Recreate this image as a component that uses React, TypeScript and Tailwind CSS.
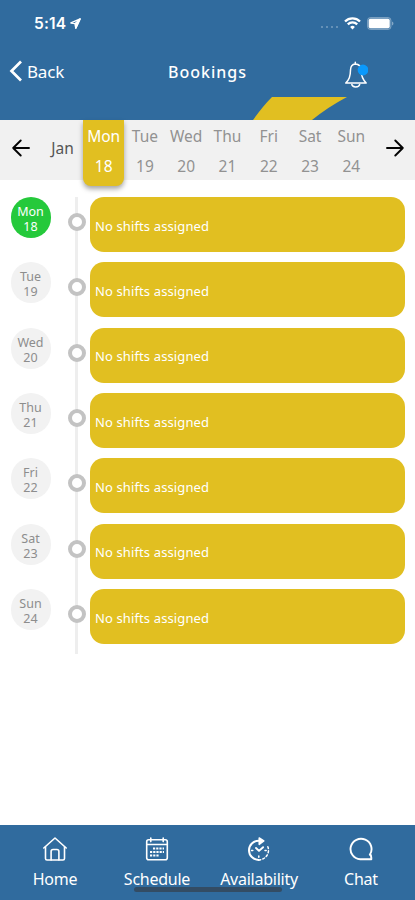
import React from 'react';

interface Day {
  name: string;
  date: number;
}

const DAYS: Day[] = [
  { name: 'Mon', date: 18 },
  { name: 'Tue', date: 19 },
  { name: 'Wed', date: 20 },
  { name: 'Thu', date: 21 },
  { name: 'Fri', date: 22 },
  { name: 'Sat', date: 23 },
  { name: 'Sun', date: 24 }
];

const SELECTED = 18;

const StatusBar: React.FC = () => (
  <div className="flex h-[46px] items-center pl-[34px] pr-[21px] text-white">
    <span className="mt-px font-['Inter','Liberation_Sans',sans-serif] text-[15.5px] font-semibold leading-none tracking-[0.2px]">5:14</span>
    <svg className="ml-1 h-[11px] w-[11px]" viewBox="0 0 12 12" fill="none" stroke="currentColor" strokeWidth="1.5" strokeLinejoin="round">
      <path d="M11 1 1 5.4l4.7.7.6 4.9z" />
      <path d="M11 1 5.7 6.1l.6 4.9z" fill="currentColor" />
    </svg>
    <div className="ml-auto mt-2 flex gap-[2.5px]">
      {[0, 1, 2, 3].map((dot) => (
        <span key={dot} className="h-[2.5px] w-[2.5px] rounded-full bg-white/35" />
      ))}
    </div>
    <svg className="ml-[6px] h-[13px] w-[17px]" viewBox="0 0 17 13" fill="none" stroke="currentColor" strokeWidth="2.3">
      <path d="M1 4.5a10.6 10.6 0 0 1 15 0" />
      <path d="M3.8 7.4a6.7 6.7 0 0 1 9.4 0" />
      <path d="m8.5 12.5-2.4-2.6a3.4 3.4 0 0 1 4.8 0z" fill="currentColor" stroke="none" />
    </svg>
    <svg className="ml-[6px] h-[13px] w-[27px]" viewBox="0 0 27 13">
      <rect x=".5" y=".5" width="23.5" height="12" rx="3" fill="#fff" fillOpacity=".15" stroke="#fff" strokeOpacity=".3" />
      <rect x="1.7" y="1.7" width="21" height="9.6" rx="1.7" fill="#fff" />
      <path d="M25.2 4.5c1.6.5 1.6 3.5 0 4z" fill="#fff" fillOpacity=".5" />
    </svg>
  </div>
);

const BellIcon: React.FC = () => (
  <svg className="h-[30px] w-6" viewBox="0 0 24 30" fill="none" stroke="currentColor" strokeWidth="1.5" strokeLinecap="round" strokeLinejoin="round">
    <path d="M11.3 4V2.2M11.3 4C8 4.3 6.6 6.6 6.500 10c-.1 6.800-1.400 9.300-4.700 13.100h20.400c-3.300-3.400-5-6.300-5.200-13.100-.1-3.400-2.100-5.800-5.700-6Z" />
    <path d="M7.8 24.4c.4 3.3 7.4 3.3 7.9 0" />
    <circle cx="19" cy="10" r="5.4" fill="#0a99fc" stroke="none" />
  </svg>
);

const Header: React.FC = () => (
  <header className="relative h-[120px] shrink-0 bg-[#306b9e]">
    <StatusBar />
    <div className="flex h-[54px] items-center pl-[9px] pr-[47px] text-white">
      <svg className="-mt-1 h-[22px] w-[14px]" viewBox="0 0 14 22" fill="none" stroke="currentColor" strokeWidth="2.7">
        <path d="M12 1.5 2.5 11l9.5 9.5" />
      </svg>
      <span className="-mt-[3px] ml-1 w-[141px] text-[17px] leading-none tracking-[-0.2px]">Back</span>
      <h1 className="-mt-[2px] text-[16px] font-medium leading-none tracking-[1px]">Bookings</h1>
      <button type="button" className="ml-auto mt-1">
        <BellIcon />
      </button>
    </div>
    <svg className="absolute bottom-0 left-[253px] h-[23px] w-[94px]" viewBox="0 0 94 23">
      <path d="M0 23Q10 9 19 0h75Q75 10 59 23Z" fill="#e1bf21" />
    </svg>
  </header>
);

const Arrow: React.FC<{ className?: string }> = ({ className }) => (
  <svg className={className} width="18" height="18" viewBox="0 0 18 18" fill="none" stroke="#050505" strokeWidth="1.9" strokeLinecap="round" strokeLinejoin="round">
    <path d="M17 9H1.2M8.7 1.5 1.2 9l7.5 7.5" />
  </svg>
);

const WeekStrip: React.FC = () => (
  <div className="flex h-[60px] shrink-0 items-center bg-[#f1f1f1] pb-[4px] pl-3">
    <Arrow />
    <span className="ml-[14px] mt-[2px] w-[37px] text-center text-[15.5px] leading-none text-[#555]">Jan</span>
    <div className="-mb-[4px] ml-[2px] flex w-[289px] self-stretch">
      {DAYS.map(({ name, date }) => (
        <div
          key={date}
          className={`flex flex-1 flex-col items-center pt-2 text-[15.5px] leading-[16px] ${
            date === SELECTED
              ? 'z-10 h-[66px] rounded-b-[8px] bg-[#e1bf21] text-white shadow-[0_3px_5px_rgba(0,0,0,0.35)]'
              : 'text-[#929292]'
          }`}
        >
          <span>{name}</span>
          <span className="mt-[14px]">{date}</span>
        </div>
      ))}
    </div>
    <Arrow className="ml-[14px] rotate-180" />
  </div>
);

const ShiftRow: React.FC<Day> = ({ name, date }) => (
  <div className="flex h-[55px] items-start">
    <div
      className={`flex h-[41px] w-10 items-center justify-center rounded-full pt-[3px] text-center text-[12.5px] leading-[15px] ${
        date === SELECTED ? 'bg-[#25c93b] text-white' : 'bg-[#f2f2f2] text-[#8d8d8d]'
      }`}
    >
      <p>
        {name}
        <br />
        {date}
      </p>
    </div>
    <div className="z-10 ml-[17px] mt-[16px] h-[18px] w-[18px] rounded-full border-[4px] border-[#c3c3c3] bg-white" />
    <div className="ml-[4.5px] flex h-full w-[315px] items-center rounded-[14px] bg-[#e1bf21] pl-[5px] pt-[4px] text-[13px] tracking-[0.12px] text-white">
      No shifts assigned
    </div>
  </div>
);

const HomeIcon: React.FC = () => (
  <svg className="h-6 w-[26px]" viewBox="0 0 26 24" fill="none" stroke="currentColor" strokeWidth="1.6" strokeLinecap="round" strokeLinejoin="round">
    <path d="M1.8 11 13 1l11.2 10" />
    <path d="M3.5 10v11.5q0 1.5 1.5 1.5h16q1.5 0 1.5-1.5V10" />
    <path d="M9.1 23v-8.5q0-2 2-2h3.8q2 0 2 2V23" />
  </svg>
);

const ScheduleIcon: React.FC = () => (
  <svg className="h-6 w-[26px]" viewBox="0 0 26 24" fill="none" stroke="currentColor" strokeWidth="1.6" strokeLinecap="round" strokeLinejoin="round">
    <rect x="2.7" y="2.8" width="20.6" height="20" rx="2" />
    <path d="M2.7 7.5h20.6M6.8 1v3.6M19.2 1v3.6" />
    <path d="M9 11.5h11M6 15h14M6 18.5h9" strokeWidth="2" strokeDasharray="2.2 1" strokeLinecap="butt" />
  </svg>
);

const AvailabilityIcon: React.FC = () => (
  <svg className="h-6 w-[26px]" viewBox="0 0 26 24" fill="none" stroke="currentColor" strokeWidth="1.5" strokeLinecap="round" strokeLinejoin="round">
    <path d="M14 3.8C7 3.3 3 8.1 3 13.2c0 5.4 4.3 9.7 9.7 9.7" strokeWidth="2" />
    <path d="M12.7 22.9c5.6 0 9.8-4.5 9.8-9.8 0-2-.6-3.7-1.7-5.3" strokeDasharray="2 2.2" />
    <path d="m13.2 1 4.6 3-4.6 3.4z" fill="currentColor" />
    <path d="m10 11 3 2.9 4.1-3.7" strokeWidth="1.9" />
    <path d="M5.5 13.4h1.3M19 13.4h1.2M12.8 19v1.2" />
  </svg>
);

const ChatIcon: React.FC = () => (
  <svg className="h-6 w-[26px]" viewBox="0 0 26 24" fill="none" stroke="currentColor" strokeWidth="1.9" strokeLinecap="round" strokeLinejoin="round">
    <path d="M21.8 17.7a10.5 10.3 0 1 0-9.6 4.6h10.6c.5 0 .7-.3.6-.8l-.5-3.2c-.1-.5-.5-.6-1.1-.6Z" />
  </svg>
);

const TABS = [
  { label: 'Home', Icon: HomeIcon },
  { label: 'Schedule', Icon: ScheduleIcon },
  { label: 'Availability', Icon: AvailabilityIcon },
  { label: 'Chat', Icon: ChatIcon }
];

const TabBar: React.FC = () => (
  <nav className="relative mt-auto flex h-[75px] shrink-0 bg-[#306b9e] pl-1 pr-[3px] text-white">
    {TABS.map(({ label, Icon }) => (
      <button key={label} type="button" className="z-10 flex flex-1 flex-col items-center pt-3">
        <Icon />
        <span className="mt-[9px] text-[16px] leading-[18px] tracking-[-0.25px]">{label}</span>
      </button>
    ))}
    <div className="absolute bottom-[8px] left-[134px] h-[5px] w-[148px] rounded-full bg-[#334c64]" />
  </nav>
);

export default function App() {
  return (
    <div className="flex h-[900px] w-[415px] flex-col overflow-hidden bg-white font-['Noto_Sans','Open_Sans',sans-serif]">
      <Header />
      <WeekStrip />
      <main className="relative mt-[17px] flex h-[457px] flex-col gap-[10.33px] pl-[10.5px]">
        <div className="absolute left-[75px] top-0 h-full w-[3px] bg-[#eeeeee]" />
        {DAYS.map((day) => (
          <ShiftRow key={day.date} {...day} />
        ))}
      </main>
      <TabBar />
    </div>
  );
}
